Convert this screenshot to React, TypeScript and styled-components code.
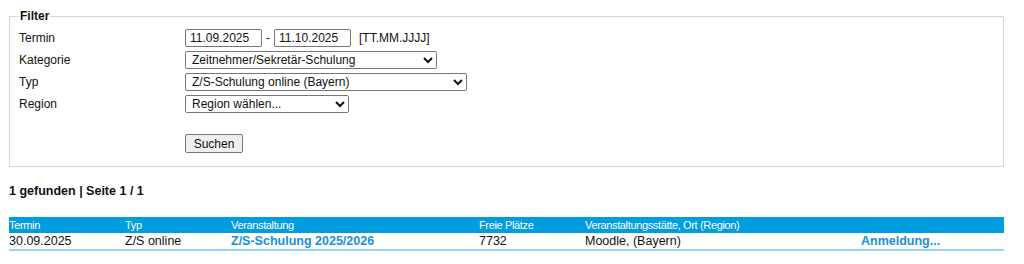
import styled, { createGlobalStyle } from "styled-components";

const GlobalStyle = createGlobalStyle`
  body {
    margin: 0;
    background: #ffffff;
    font-family: "Liberation Sans", Arial, sans-serif;
    font-size: 12px;
    color: #111111;
  }
`;

const rows = [
  {
    termin: "30.09.2025",
    typ: "Z/S online",
    veranstaltung: "Z/S-Schulung 2025/2026",
    plaetze: "7732",
    ort: "Moodle, (Bayern)",
  },
];

export default function App() {
  return (
    <SPage>
      <GlobalStyle />
      <SFilter>
        <SLegend>Filter</SLegend>
        <SFormGrid>
          <SLabel>Termin</SLabel>
          <SField>
            <SDateInput type="text" defaultValue="11.09.2025" />
            <span>-</span>
            <SDateInput type="text" defaultValue="11.10.2025" />
            <SHint>[TT.MM.JJJJ]</SHint>
          </SField>

          <SLabel>Kategorie</SLabel>
          <SField>
            <SSelect $width={252} defaultValue="zs">
              <option value="zs">Zeitnehmer/Sekretär-Schulung</option>
            </SSelect>
          </SField>

          <SLabel>Typ</SLabel>
          <SField>
            <SSelect $width={282} defaultValue="online">
              <option value="online">Z/S-Schulung online (Bayern)</option>
            </SSelect>
          </SField>

          <SLabel>Region</SLabel>
          <SField>
            <SSelect $width={164} defaultValue="">
              <option value="">Region wählen...</option>
            </SSelect>
          </SField>
        </SFormGrid>
        <SButtonRow>
          <SButton type="button">Suchen</SButton>
        </SButtonRow>
      </SFilter>

      <SCount>1 gefunden | Seite 1 / 1</SCount>

      <STable>
        <thead>
          <tr>
            <STh $width={116}>Termin</STh>
            <STh $width={106}>Typ</STh>
            <STh $width={248}>Veranstaltung</STh>
            <STh $width={106}>Freie Plätze</STh>
            <STh $width={276}>Veranstaltungsstätte, Ort (Region)</STh>
            <STh />
          </tr>
        </thead>
        <tbody>
          {rows.map((r) => (
            <tr key={r.termin}>
              <STd>{r.termin}</STd>
              <STd>{r.typ}</STd>
              <STd>
                <SLink href="#">{r.veranstaltung}</SLink>
              </STd>
              <STd>{r.plaetze}</STd>
              <STd>{r.ort}</STd>
              <STd>
                <SLink href="#">Anmeldung...</SLink>
              </STd>
            </tr>
          ))}
        </tbody>
      </STable>
    </SPage>
  );
}

const SPage = styled.div`
  padding: 9px 20px 0 9px;
`;

const SFilter = styled.fieldset`
  margin: 0;
  padding: 4px 10px 13px 9px;
  border: 1px solid #d6d6ce;
`;

const SLegend = styled.legend`
  font-weight: bold;
  font-size: 12px;
  padding: 0 1px;
  margin-left: 0;
  line-height: 14px;
`;

const SFormGrid = styled.div`
  display: grid;
  grid-template-columns: 166px auto;
  grid-auto-rows: 22px;
  align-items: center;
`;

const SLabel = styled.div`
  font-size: 12px;
`;

const SField = styled.div`
  display: flex;
  align-items: center;
  gap: 4px;
`;

const SButtonRow = styled.div`
  margin: 19px 0 0 166px;
  display: flex;
`;

const SDateInput = styled.input`
  width: 77px;
  height: 18px;
  box-sizing: border-box;
  border: 1px solid #767676;
  border-radius: 2px;
  padding: 0 4px;
  font-family: "Liberation Sans", Arial, sans-serif;
  font-size: 12px;
  color: #111111;
`;

const SHint = styled.span`
  margin-left: 4px;
`;

const SSelect = styled.select<{ $width: number }>`
  width: ${(p) => p.$width}px;
  height: 18px;
  box-sizing: border-box;
  font-family: "Liberation Sans", Arial, sans-serif;
  font-size: 12px;
  color: #111111;
  border: 1px solid #767676;
  border-radius: 2px;
  background: #ffffff;
  padding: 0 0 0 2px;
`;

const SButton = styled.button`
  height: 19px;
  width: 58px;
  padding: 0;
  font-family: "Liberation Sans", Arial, sans-serif;
  font-size: 12px;
  color: #111111;
  background: #efefef;
  border: 1px solid #767676;
  border-radius: 2px;
`;

const SCount = styled.div`
  margin-top: 17px;
  font-weight: bold;
  font-size: 12.5px;
  line-height: 14px;
`;

const STable = styled.table`
  margin-top: 19px;
  width: 995px;
  border-collapse: collapse;
  table-layout: fixed;
  font-size: 12.5px;
`;

const STh = styled.th<{ $width?: number }>`
  box-sizing: border-box;
  width: ${(p) => (p.$width ? `${p.$width}px` : "auto")};
  background: #009ee0;
  color: #ffffff;
  font-weight: normal;
  font-size: 11px;
  letter-spacing: -0.35px;
  text-align: left;
  height: 16px;
  padding: 0;
  line-height: 16px;
`;

const STd = styled.td`
  padding: 0;
  height: 16px;
  line-height: 16px;
  border-bottom: 2px solid #94d5f1;
  white-space: nowrap;
`;

const SLink = styled.a`
  color: #1a90d9;
  font-weight: bold;
  text-decoration: none;
`;
